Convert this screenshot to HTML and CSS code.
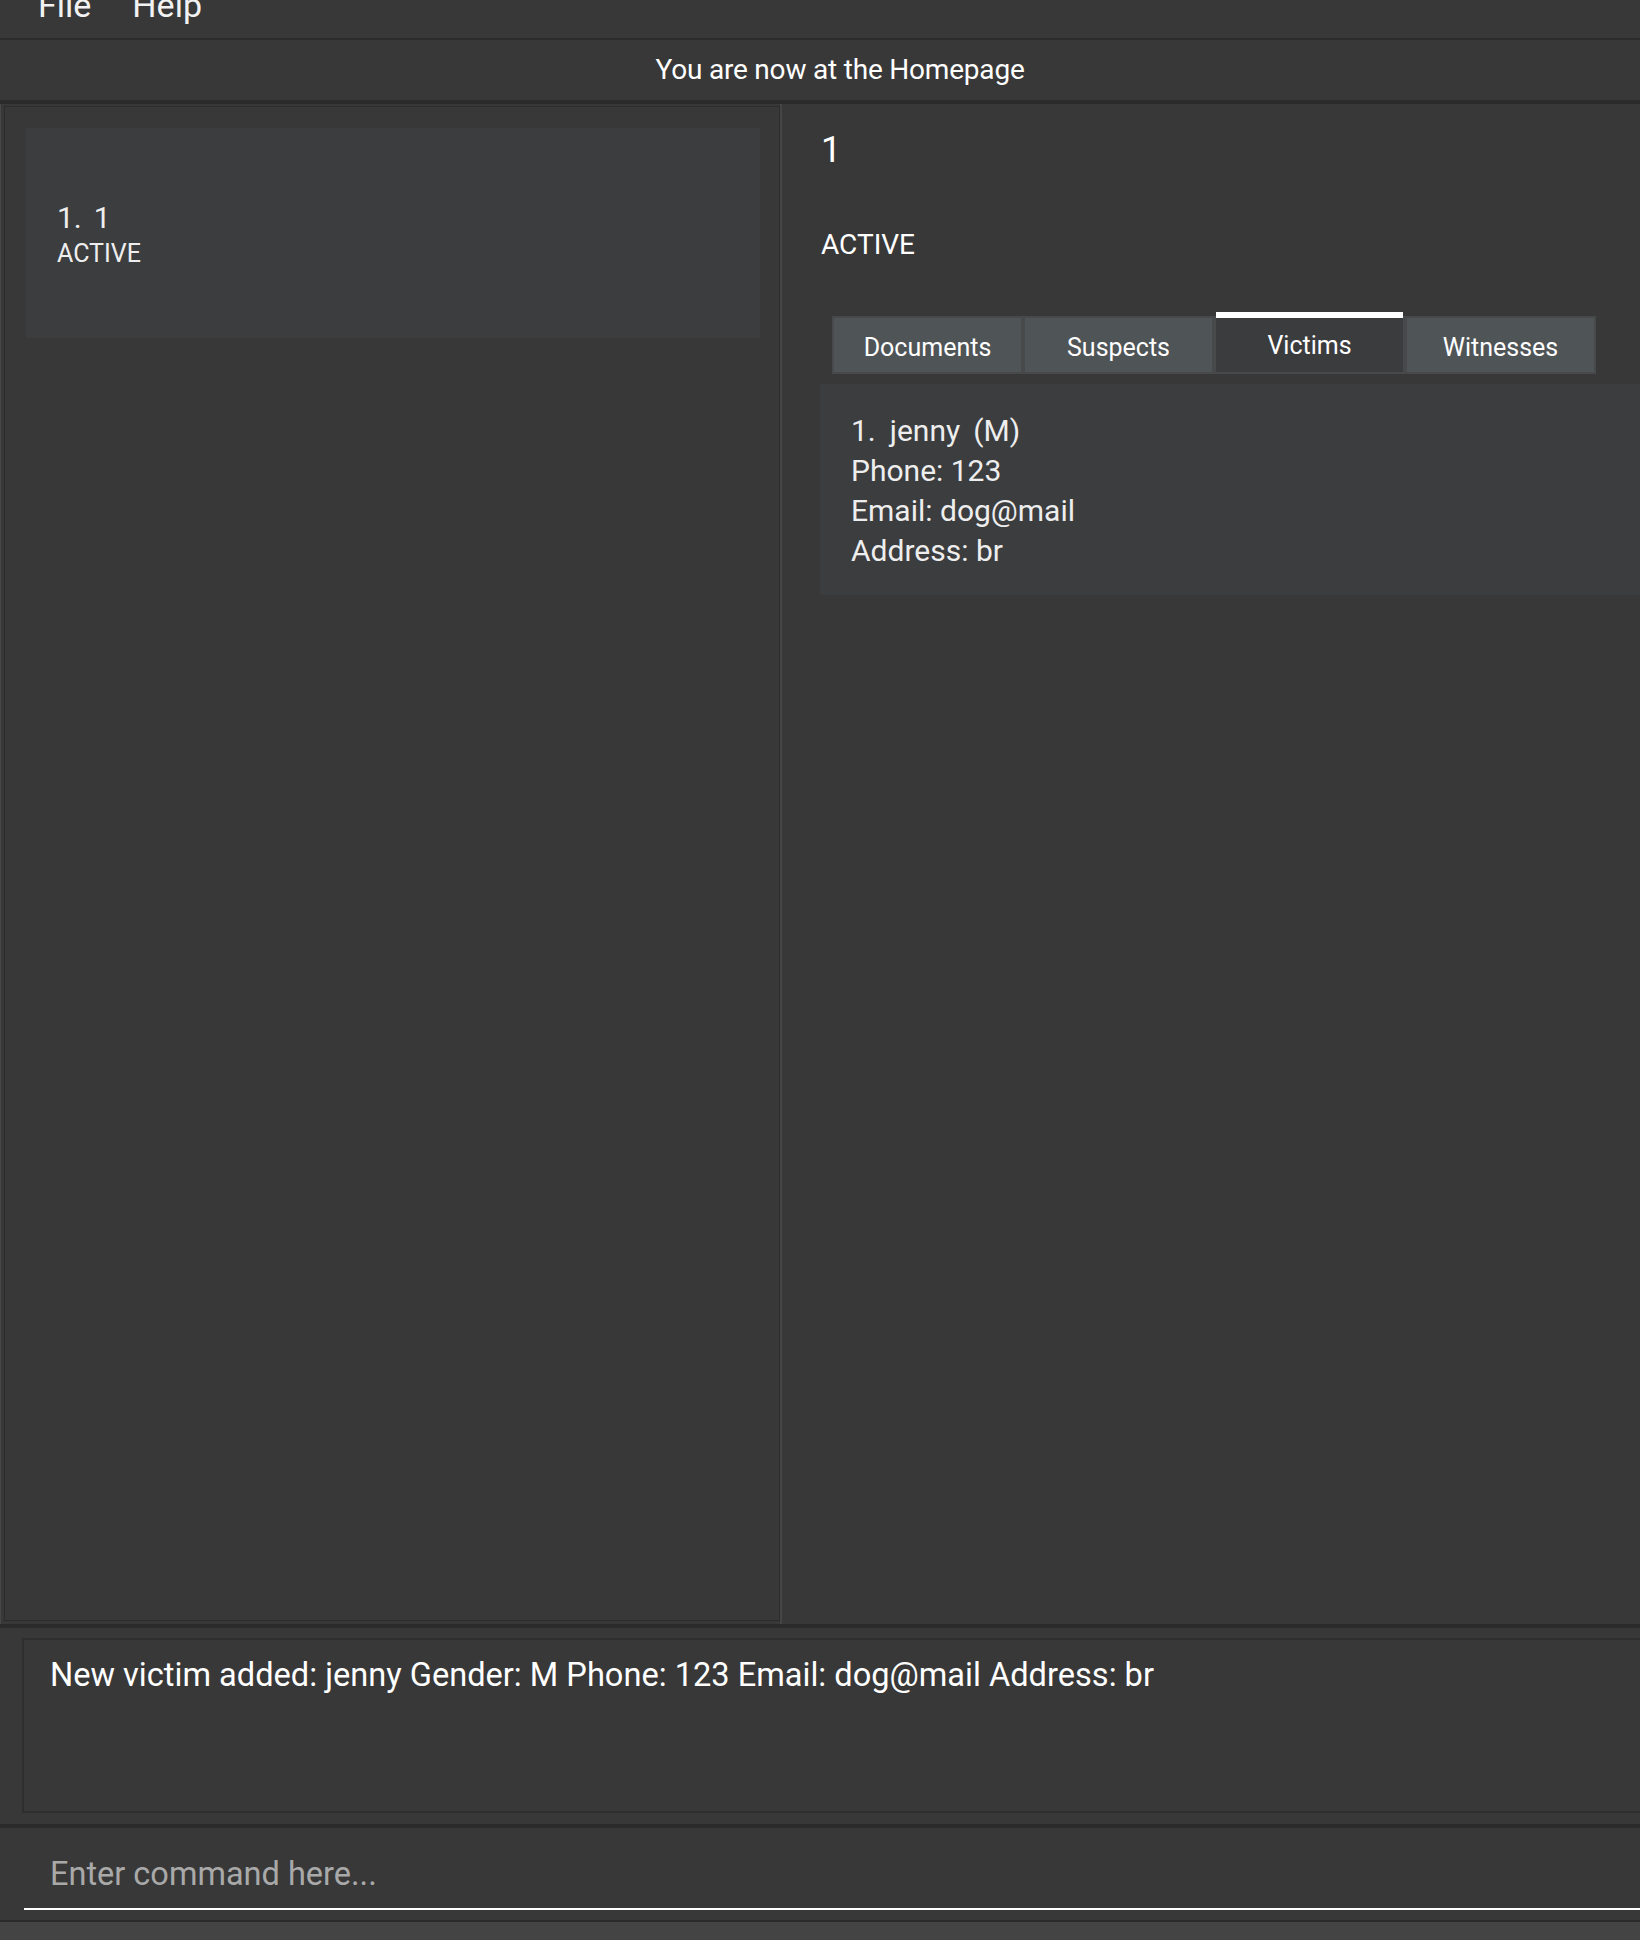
FILE: index.html
```html
<!DOCTYPE html>
<html lang="en">
<head>
<meta charset="utf-8">
<title>Case Book</title>
<link rel="stylesheet" href="styles.css">
</head>
<body>
<div class="app">
  <div class="menubar">
    <span class="menu-item">File</span>
    <span class="menu-item">Help</span>
  </div>
  <div class="sep"></div>
  <div class="status">You are now at the Homepage</div>
  <div class="band"></div>
  <div class="main">
    <div class="left">
      <div class="list">
        <div class="case-card">
          <div class="case-title"><span class="idx">1.</span>1</div>
          <div class="case-status">ACTIVE</div>
        </div>
      </div>
    </div>
    <div class="right">
      <div class="detail-title">1</div>
      <div class="detail-status">ACTIVE</div>
      <div class="tabs">
        <div class="tab">Documents</div>
        <div class="tab">Suspects</div>
        <div class="tab selected">Victims</div>
        <div class="tab">Witnesses</div>
      </div>
      <div class="person-card">
        <div class="line"><span class="pidx">1.</span><span class="pname">jenny</span>(M)</div>
        <div class="line">Phone: 123</div>
        <div class="line">Email: dog@mail</div>
        <div class="line">Address: br</div>
      </div>
    </div>
  </div>
  <div class="band"></div>
  <div class="result-area">
    <div class="result-box">New victim added: jenny Gender: M Phone: 123 Email: dog@mail Address: br</div>
  </div>
  <div class="band"></div>
  <div class="command-area">
    <div class="command-box">Enter command here...</div>
  </div>
  <div class="footer"></div>
</div>
</body>
</html>
```

FILE: styles.css
```css
html, body {
  margin: 0;
  padding: 0;
}
body {
  background: #383838;
  font-family: Roboto, "Liberation Sans", sans-serif;
  color: #ffffff;
}
.app {
  width: 1640px;
  height: 1940px;
  overflow: hidden;
  display: flex;
  flex-direction: column;
  background: #383838;
}
.menubar {
  height: 38px;
  display: flex;
  align-items: flex-start;
  gap: 41px;
  padding-left: 38px;
  overflow: hidden;
  box-sizing: border-box;
}
.menu-item {
  font-size: 34px;
  line-height: 34px;
  margin-top: -12px;
  color: #f2f2f2;
}
.sep {
  height: 2px;
  background: #2b2b2b;
}
.status {
  height: 60px;
  display: flex;
  justify-content: center;
  align-items: center;
  padding-left: 40px;
  font-size: 28px;
  line-height: 60px;
  letter-spacing: -0.2px;
}
.band {
  height: 4px;
  background: #2b2b2b;
}
.main {
  height: 1520px;
  display: flex;
}
.left {
  width: 780px;
  box-sizing: border-box;
  padding: 2px 0 3px 3px;
  border-left: 1px solid #474747;
}
.list {
  height: 100%;
  box-sizing: border-box;
  border: 1px solid #2c2c2c;
  padding: 21px 19px 0 21px;
}
.case-card {
  height: 210px;
  box-sizing: border-box;
  background: #3c3d3f;
  padding: 72px 31px 0 31px;
  color: #eeeeee;
}
.case-title {
  font-size: 30px;
  line-height: 36px;
}
.idx {
  margin-right: 12px;
}
.case-status {
  font-size: 25px;
  line-height: 30px;
  margin-top: 3px;
}
.right {
  flex: 1;
  border-left: 2px solid #454545;
  padding: 24px 0 0 39px;
  box-sizing: border-box;
}
.detail-title {
  font-size: 36px;
  line-height: 44px;
}
.detail-status {
  font-size: 28px;
  line-height: 34px;
  margin-top: 56px;
}
.tabs {
  margin-top: 54px;
  margin-left: 11px;
  width: 764px;
  box-sizing: border-box;
  display: flex;
  gap: 4px;
  padding: 2px 2px 2px 2px;
  background: #48494a;
}
.tab {
  flex: 1;
  height: 54px;
  box-sizing: border-box;
  background: #4f5457;
  display: flex;
  justify-content: center;
  align-items: center;
  padding-top: 4px;
  font-size: 25px;
  color: #ffffff;
}
.tab.selected {
  background: #3b3c3e;
  border-top: 6px solid #ffffff;
  margin-top: -6px;
  height: 60px;
  padding-top: 0;
}
.person-card {
  margin-top: 10px;
  margin-left: -1px;
  background: #3c3d3f;
  padding: 27px 31px 24px 31px;
  color: #eeeeee;
}
.line {
  font-size: 30px;
  line-height: 40px;
}
.pidx {
  margin-right: 14px;
}
.pname {
  margin-right: 13px;
}
.result-area {
  height: 196px;
  box-sizing: border-box;
  padding: 10px 0 11px 22px;
}
.result-box {
  height: 100%;
  box-sizing: border-box;
  border: 2px solid #2e2e2e;
  border-right: none;
  padding: 15px 26px;
  font-size: 32.6px;
  line-height: 40px;
  color: #ffffff;
  white-space: nowrap;
}
.command-area {
  height: 92px;
  box-sizing: border-box;
  padding: 26px 0 0 24px;
}
.command-box {
  font-size: 32.5px;
  line-height: 40px;
  color: #a9a9a9;
  padding: 0 0 14px 26px;
  border-bottom: 2px solid #ffffff;
}
.footer {
  flex: 1;
  border-top: 2px solid #2b2b2b;
  background: #444444;
}
```
